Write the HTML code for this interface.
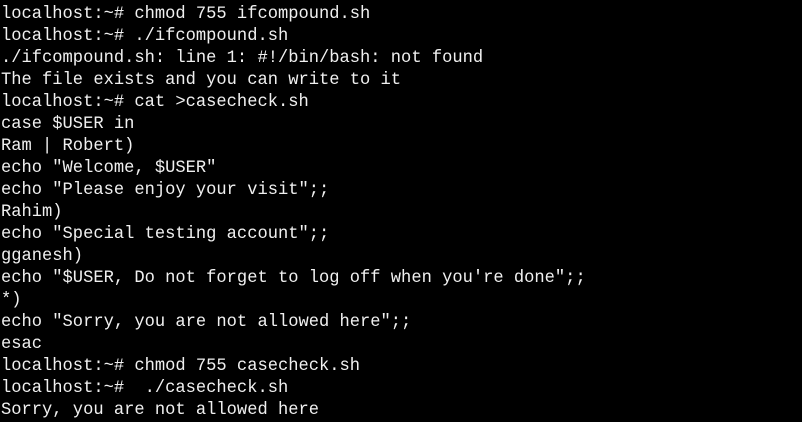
<!DOCTYPE html>
<html><head><style>
body{margin:0;background:#000;width:802px;height:420px;overflow:hidden}
pre{margin:0;padding:4px 0 0 1px;font-family:"Liberation Mono",monospace;font-size:17.1px;line-height:22px;color:#f0f0f0;white-space:pre}
</style></head><body><pre>localhost:~# chmod 755 ifcompound.sh
localhost:~# ./ifcompound.sh
./ifcompound.sh: line 1: #!/bin/bash: not found
The file exists and you can write to it
localhost:~# cat &gt;casecheck.sh
case $USER in
Ram | Robert)
echo "Welcome, $USER"
echo "Please enjoy your visit";;
Rahim)
echo "Special testing account";;
gganesh)
echo "$USER, Do not forget to log off when you're done";;
*)
echo "Sorry, you are not allowed here";;
esac
localhost:~# chmod 755 casecheck.sh
localhost:~#  ./casecheck.sh
Sorry, you are not allowed here</pre></body></html>
